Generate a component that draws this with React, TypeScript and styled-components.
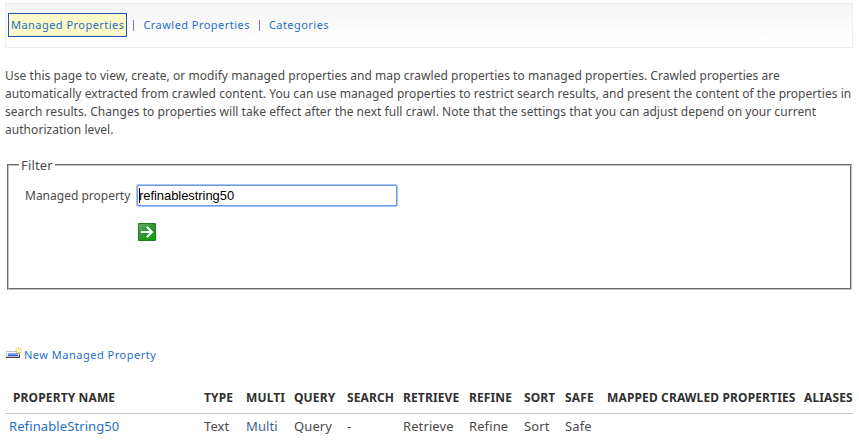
import React from 'react';
import styled, { createGlobalStyle } from 'styled-components';

const GlobalStyle = createGlobalStyle`
  *, *::before, *::after { box-sizing: border-box; }
  body {
    margin: 0;
    background: #fff;
    color: #4a4a4a;
    font-family: "Noto Sans", "Segoe UI", sans-serif;
    font-size: 12px;
    overflow: hidden;
  }
`;

const Page = styled.main`
  width: 859px;
  height: 443px;
  padding: 3px 6px 0 5px;
  display: flex;
  flex-direction: column;
  overflow: hidden;
`;

const NavBar = styled.nav`
  height: 45px;
  flex: none;
  display: flex;
  align-items: center;
  padding: 0 2px 1px;
  border: 1px solid #eee;
  background: linear-gradient(#f4f4f4, #fff 90%);
  font-size: 11px;
  letter-spacing: 0.46px;
`;

const NavLink = styled.a<{ $selected?: boolean }>`
  height: 24px;
  padding: 0 2px;
  line-height: 22px;
  border: 1px solid ${(p) => (p.$selected ? '#2353b2' : 'transparent')};
  background: ${(p) => (p.$selected ? '#fdf9c8' : 'transparent')};
  color: #1f70c4;
  white-space: nowrap;
`;

const Divider = styled.span`
  width: 1px;
  height: 11px;
  margin: 1px 6px 0 6px;
  background: #8074c4;
`;

const Description = styled.p`
  margin: 19px 0 0;
  line-height: 18px;
  letter-spacing: 0.045px;
  white-space: nowrap;
`;

const Filter = styled.fieldset`
  width: 845px;
  height: 135px;
  flex: none;
  margin: 16px 0 0 2px;
  padding: 0 0 0 16px;
  border: 2px groove #c0c0c0;
`;

const Legend = styled.legend`
  margin-left: -6px;
  padding: 0 2px;
  height: 20px;
  font-size: 13px;
  line-height: 20px;
  letter-spacing: 0.15px;
`;

const FilterGrid = styled.div`
  display: grid;
  grid-template-columns: 111px 262px;
  grid-template-rows: 23px 18px;
  row-gap: 16px;
  padding-top: 9px;
`;

const Label = styled.label`
  line-height: 23px;
`;

const Field = styled.div`
  display: flex;
  align-items: center;
  border: 1px solid #a6c6fb;
  border-radius: 2px;
  background: #fff;
  box-shadow: inset 0 0 0 1px #6c99e0;
  padding-left: 2px;
  color: #000;
  font: 13px/20px "Liberation Sans", Arial, sans-serif;
  letter-spacing: -0.06px;
`;

const Caret = styled.span`
  width: 1px;
  height: 15px;
  margin-right: -1px;
  background: #000;
`;

const GoButton = styled.button`
  grid-column: 2;
  width: 18px;
  height: 18px;
  margin-left: 2px;
  padding: 0;
  border: 0;
  background: none;
  svg { display: block; }
`;

const NewProperty = styled.a`
  display: flex;
  align-items: center;
  gap: 2px;
  height: 18px;
  margin: 56px 0 0 1px;
  color: #1f70c4;
  font-size: 11px;
  line-height: 18px;
  letter-spacing: 0.5px;
  svg { flex: none; margin-top: -4px; }
`;

const TableRow = styled.div<{ $head?: boolean }>`
  display: grid;
  grid-template-columns: 199px 42px 48px 53px 56px 66px 55px 41px 42px 197px 49px;
  width: 848px;
  flex: none;
  height: ${(p) => (p.$head ? '33px' : '26px')};
  margin-top: ${(p) => (p.$head ? '17px' : '0')};
  line-height: ${(p) => (p.$head ? '34px' : '25px')};
  font-size: ${(p) => (p.$head ? '12px' : '13px')};
  font-weight: ${(p) => (p.$head ? 700 : 400)};
  letter-spacing: ${(p) => (p.$head ? '0.13px' : '0.1px')};
  color: ${(p) => (p.$head ? '#303030' : '#4a4a4a')};
  border-bottom: ${(p) => (p.$head ? '1px solid #c8c8c8' : '0')};
  white-space: nowrap;
`;

const NameCell = styled.span<{ $head?: boolean }>`
  padding-left: ${(p) => (p.$head ? '8px' : '4px')};
  color: ${(p) => (p.$head ? 'inherit' : '#1f70c4')};
`;

const Cell = styled.span<{ $accent?: boolean }>`
  color: ${(p) => (p.$accent ? '#3d6291' : 'inherit')};
`;

const headings = ['TYPE', 'MULTI', 'QUERY', 'SEARCH', 'RETRIEVE', 'REFINE', 'SORT', 'SAFE', 'MAPPED CRAWLED PROPERTIES', 'ALIASES'];
const values = ['Text', 'Multi', 'Query', '-', 'Retrieve', 'Refine', 'Sort', 'Safe', '', ''];

const GoIcon = () => (
  <svg width="18" height="18" viewBox="0 0 18 18">
    <defs>
      <linearGradient id="go" x1="0" y1="0" x2="1" y2="1">
        <stop offset="0" stopColor="#63ad63" />
        <stop offset="0.5" stopColor="#2f922f" />
        <stop offset="1" stopColor="#00ad00" />
      </linearGradient>
    </defs>
    <rect width="18" height="18" rx="1" fill="#237a23" />
    <rect x="1" y="1" width="16" height="16" fill="url(#go)" />
    <path d="M3 9H14M8.8 3.8L14 9L8.8 14.2" fill="none" stroke="#fff" strokeWidth="2" />
  </svg>
);

const NewIcon = () => (
  <svg width="16" height="12" viewBox="0 0 16 12">
    <rect x="0.5" y="4.5" width="13" height="5" fill="#fff" stroke="#c4c4c4" />
    <path d="M0 10.5H14M13.5 7V11" stroke="#444" fill="none" />
    <rect x="2" y="6" width="10" height="2" fill="#7aa2f4" />
    <path d="M2 8.5H12" stroke="#3059c4" />
    <path d="M12.5 0V7M9 3.5H16M9.8 0.8L15.2 6.2M15.2 0.8L9.8 6.2" stroke="#f2cb50" />
    <rect x="11" y="2" width="3" height="3" fill="#fff3a0" />
  </svg>
);

export default function App() {
  return (
    <>
      <GlobalStyle />
      <Page>
        <NavBar>
          <NavLink $selected>Managed Properties</NavLink>
          <Divider />
          <NavLink>Crawled Properties</NavLink>
          <Divider />
          <NavLink>Categories</NavLink>
        </NavBar>
        <Description>
          Use this page to view, create, or modify managed properties and map crawled properties to managed properties. Crawled properties are
          <br />
          automatically extracted from crawled content. You can use managed properties to restrict search results, and present the content of the properties in
          <br />
          search results. Changes to properties will take effect after the next full crawl. Note that the settings that you can adjust depend on your current
          <br />
          authorization level.
        </Description>
        <Filter>
          <Legend>Filter</Legend>
          <FilterGrid>
            <Label>Managed property</Label>
            <Field>
              <Caret />
              refinablestring50
            </Field>
            <GoButton aria-label="Search">
              <GoIcon />
            </GoButton>
          </FilterGrid>
        </Filter>
        <NewProperty>
          <NewIcon />
          New Managed Property
        </NewProperty>
        <TableRow $head>
          <NameCell $head>PROPERTY NAME</NameCell>
          {headings.map((text) => (
            <Cell key={text}>{text}</Cell>
          ))}
        </TableRow>
        <TableRow>
          <NameCell>RefinableString50</NameCell>
          {values.map((text, i) => (
            <Cell key={headings[i]} $accent={text === 'Multi'}>{text}</Cell>
          ))}
        </TableRow>
      </Page>
    </>
  );
}
